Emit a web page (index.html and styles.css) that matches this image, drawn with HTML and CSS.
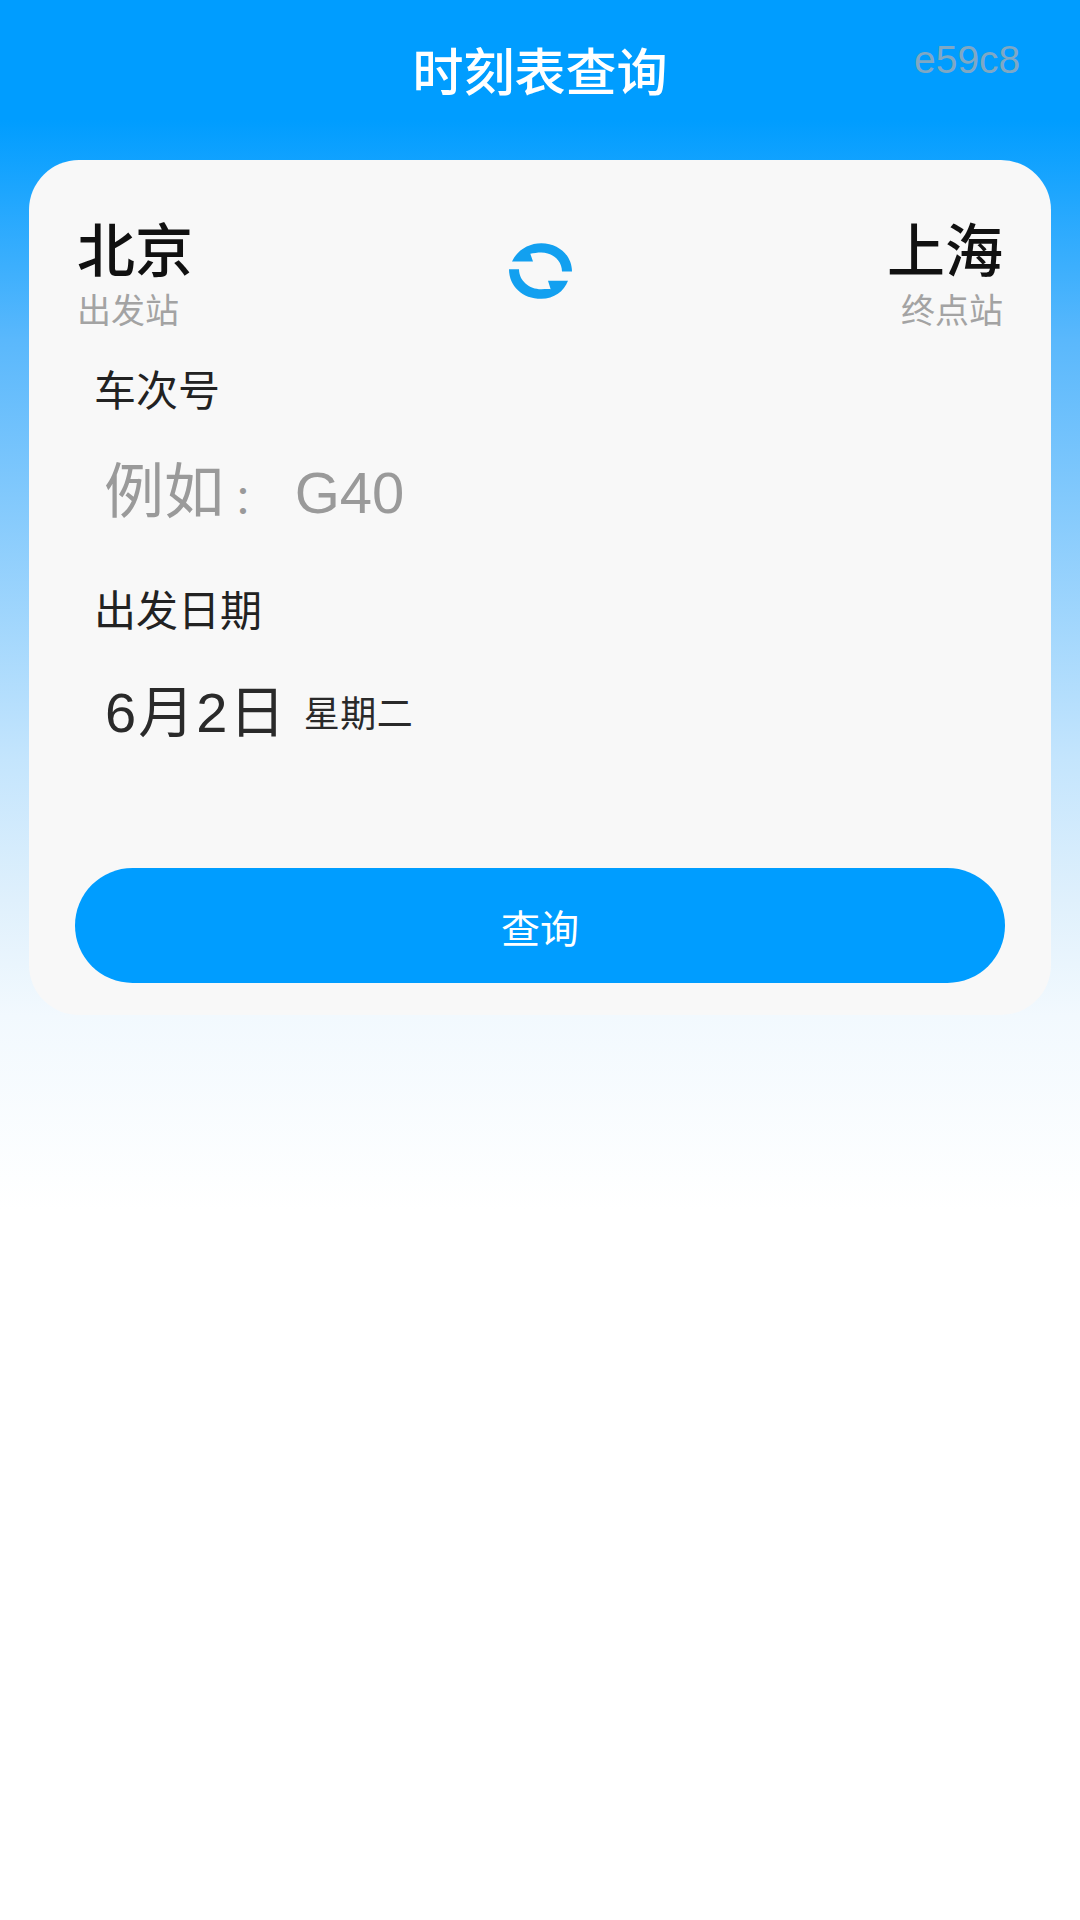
FILE: index.html
```html
<!DOCTYPE html>
<html lang="zh">
<head>
  <meta charset="UTF-8" />
  <meta name="viewport" content="width=device-width, initial-scale=1.0" />
  <title>时刻表查询</title>
  <link rel="stylesheet" href="styles.css">
</head>
<body>
  <div class="page">
    <div class="header">
      <h1>时刻表查询</h1>
      <span class="tag">e59c8</span>
    </div>

    <div class="card">
      <div class="stations">
        <div class="station">
          <div class="city">北京</div>
          <div class="hint">出发站</div>
        </div>
        <svg class="swap" viewBox="0 0 189 167" width="63" height="56">
          <path d="M9 55 C25 20 60 0 97 0 C150 0 189 38 189 85 L159 85 C159 52 130 28 97 28 C85 28 74 30 64 32 L72 55 Z" fill="#12a0f0" />
          <path d="M0 78 L30 78 C30 112 60 138 97 138 C108 138 118 137 125 138 L117 113 L177 113 C165 145 135 167 97 167 C40 167 0 128 0 78 Z" fill="#12a0f0" />
        </svg>
        <div class="station right">
          <div class="city">上海</div>
          <div class="hint">终点站</div>
        </div>
      </div>

      <div class="field">
        <div class="label">车次号</div>
        <div class="value placeholder">例如<span class="colon">：</span> <span class="code">G40</span></div>
      </div>

      <div class="field">
        <div class="label">出发日期</div>
        <div class="value date">6月2日 <span class="week">星期二</span></div>
      </div>

      <button class="search">查询</button>
    </div>
  </div>
</body>
</html>
```

FILE: styles.css
```css
body {
  margin: 0;
  padding: 0;
  font-family: "Liberation Sans", "Noto Sans CJK SC", sans-serif;
  background: #fff;
}

.page {
  position: relative;
  height: 1920px;
  overflow: hidden;
  background: linear-gradient(180deg, #009dff 0, #009dff 120px, #5ab8fc 340px, #c4e5fd 760px, #dff0fc 900px, #f2f9fe 1015px, #fff 1210px);
}

.header {
  height: 160px;
  display: flex;
  justify-content: center;
}

.header h1 {
  margin: 46px 0 0;
  font-size: 51px;
  line-height: 56px;
  font-weight: 500;
  color: #fff;
}

.tag {
  position: absolute;
  top: 39px;
  left: 914px;
  font-size: 39px;
  line-height: 42px;
  color: #7fa8c4;
}

.card {
  margin: 0 29px;
  height: 855px;
  padding: 0 46px;
  box-sizing: border-box;
  background: #f8f8f8;
  border-radius: 50px;
  display: flex;
  flex-direction: column;
}

.stations {
  margin-top: 60px;
  display: flex;
  justify-content: space-between;
  align-items: center;
  padding: 0 2px;
}

.city {
  font-size: 58px;
  line-height: 64px;
  font-weight: 500;
  color: #111;
}

.hint {
  margin-top: 7px;
  font-size: 34px;
  line-height: 40px;
  color: #a3a3a3;
}

.station.right {
  text-align: right;
}

.swap {
  margin: 0 -1px 9px 0;
}

.field {
  padding-left: 19px;
}

.label {
  font-size: 42px;
  line-height: 50px;
  color: #222;
}

.stations + .field {
  margin-top: 36px;
}

.field + .field {
  margin-top: 52px;
}

.value {
  margin: 40px 0 0 11px;
  line-height: 72px;
  white-space: nowrap;
}

.placeholder {
  margin-left: 10px;
  font-size: 60px;
  color: #9a9a9a;
}

.colon {
  margin-left: 9px;
  font-size: 40px;
}

.code {
  margin-left: 5px;
  font-size: 58px;
}

.date {
  font-size: 56px;
  letter-spacing: 2px;
  color: #2a2a2a;
}

.week {
  margin-left: -1px;
  font-size: 36px;
  letter-spacing: 0.5px;
  vertical-align: 5px;
}

.search {
  margin-top: auto;
  margin-bottom: 32px;
  height: 115px;
  border: none;
  border-radius: 58px;
  background: #009dff;
  color: #fff;
  font-family: inherit;
  font-size: 39px;
}
```
